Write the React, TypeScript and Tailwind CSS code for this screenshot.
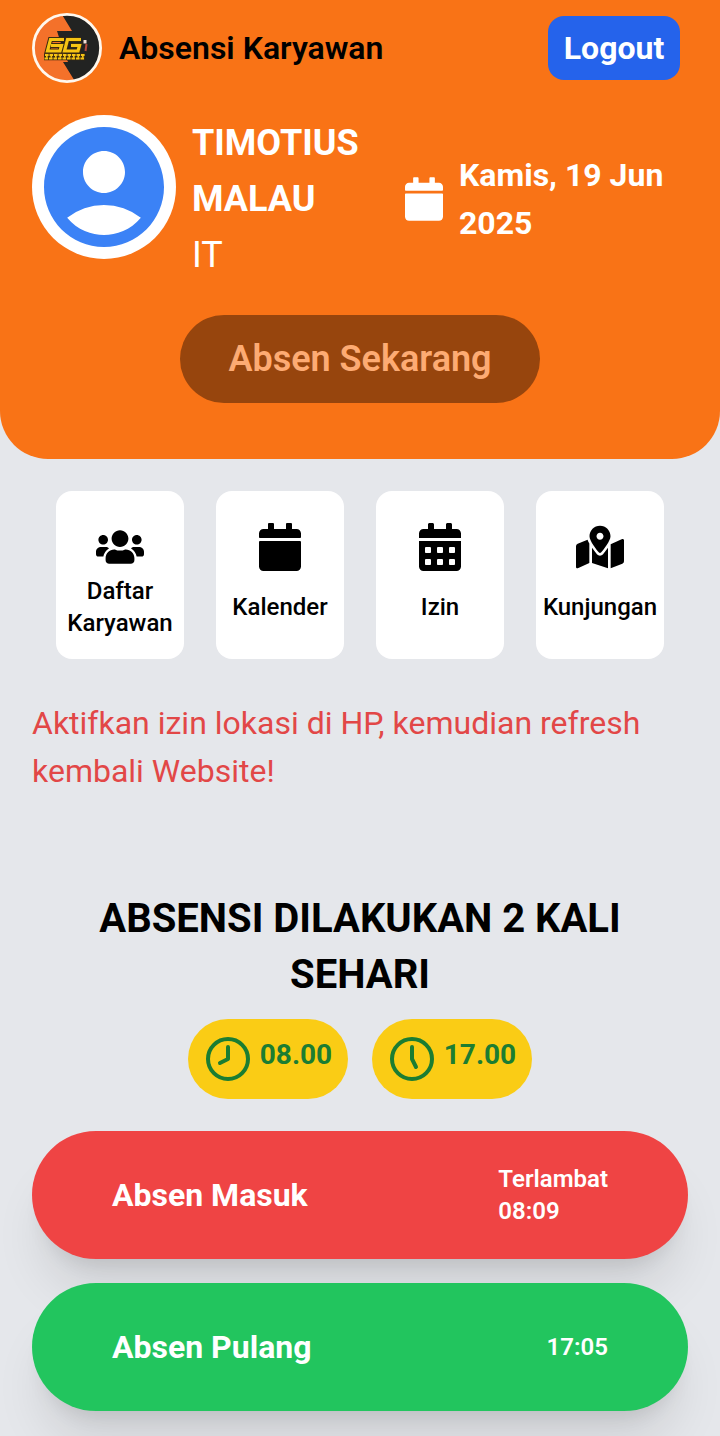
import React from 'react';
import { FaCalendar, FaCalendarAlt, FaMapMarkedAlt, FaUsers } from 'react-icons/fa';
import { MdAccountCircle } from 'react-icons/md';
import { Clock5, Clock8 } from 'lucide-react';

function Logo() {
  return (
    <svg viewBox="0 0 70 70" className="size-[70px]" aria-hidden="true">
      <defs>
        <clipPath id="disc"><circle cx="35" cy="35" r="33.5" /></clipPath>
      </defs>
      <g clipPath="url(#disc)">
        <rect width="70" height="70" fill="#f4712a" />
        <path d="M29 0 L40 18 L25 18 L32 40 L36 49 L31 49 L44 70 H70 V0Z" fill="#222322" />
      </g>
      <circle cx="35" cy="35" r="33.6" fill="none" stroke="#fff8ee" strokeWidth="2.8" />
      <g fill="none" stroke="#3a2a10" strokeWidth="5.2">
        <path d="M32 26.500H18.500L15.500 38H28L29.500 32.500H19" />
        <path d="M49 26.500H35.500L32.500 38H46L47.500 32.500H39" />
      </g>
      <g fill="none" stroke="#f6c414" strokeWidth="3.2">
        <path d="M32 26.500H18.500L15.500 38H28L29.500 32.500H19" />
        <path d="M49 26.500H35.500L32.500 38H46L47.500 32.500H39" />
      </g>
      <path d="M12 43.800H53" stroke="#3a2a10" strokeWidth="7" />
      <path d="M13 42H53M12.500 45.500H52" stroke="#f6c414" strokeWidth="1.8" strokeDasharray="3.600 0.900" />
      <path d="M14 43.700H52" stroke="#f6c414" strokeWidth="2" strokeDasharray="1.600 2.900" />
      <path d="M53 27v3.500" stroke="#f4ded4" strokeWidth="3" />
      <path d="M54.500 31l-1 7" stroke="#b9493c" strokeWidth="2" />
    </svg>
  );
}

function MenuCard({ icon, label }: { icon: React.ReactNode; label: string }) {
  return (
    <button className="flex h-42 w-32 flex-col items-center rounded-2xl bg-white pt-8 text-2xl leading-8 font-medium">
      {icon}
      {label}
    </button>
  );
}

export default function App() {
  return (
    <div className="h-[1436px] overflow-hidden bg-gray-200 font-['Roboto',sans-serif] text-black">
      <header className="h-[459px] rounded-b-[48px] bg-[#f97316] pt-[13px]">
        <div className="flex items-center justify-between pr-10 pl-8">
          <div className="flex items-center gap-[17px]">
            <Logo />
            <h1 className="text-[32px] leading-[48px] font-semibold">Absensi Karyawan</h1>
          </div>
          <button className="h-16 w-33 rounded-2xl bg-[#2563eb] text-[32px] leading-[48px] font-bold text-white">Logout</button>
        </div>
        <div className="mt-8 flex px-8 text-white">
          <div className="size-36 shrink-0 rounded-full bg-white text-[#3b82f6]">
            <MdAccountCircle className="size-36" />
          </div>
          <div className="ml-4 w-[213px] text-4xl leading-[56px]">
            <p className="font-bold">TIMOTIUS MALAU</p>
            <p>IT</p>
          </div>
          <div className="flex h-[168px] items-center">
            <FaCalendar className="h-11 w-[38px] shrink-0" />
            <p className="ml-4 w-[220px] text-[32px] leading-[48px] font-bold">Kamis, 19 Jun 2025</p>
          </div>
        </div>
        <div className="mt-8 flex justify-center">
          <button className="h-22 w-90 rounded-full bg-[#97450d] text-4xl font-semibold text-[#fdab73]">Absen Sekarang</button>
        </div>
      </header>
      <nav className="mt-8 flex justify-center gap-8">
        <MenuCard icon={<FaUsers className="size-12 shrink-0 mb-1" />} label="Daftar Karyawan" />
        <MenuCard icon={<FaCalendar className="mb-5 size-12" />} label="Kalender" />
        <MenuCard icon={<FaCalendarAlt className="mb-5 size-12" />} label="Izin" />
        <MenuCard icon={<FaMapMarkedAlt className="mb-5 size-12" />} label="Kunjungan" />
      </nav>
      <p className="mx-8 mt-10 text-[32px] leading-[48px] text-[#e24747]">Aktifkan izin lokasi di HP, kemudian refresh kembali Website!</p>
      <main className="px-8 pt-24">
        <h2 className="text-center text-[40px] leading-[56px] font-bold">ABSENSI DILAKUKAN 2 KALI SEHARI</h2>
        <div className="mt-4 flex justify-center gap-6 text-[28px] leading-10 font-bold text-[#1b7d32]">
          <div className="flex h-20 w-40 items-center justify-center rounded-full bg-[#facc15]">
            <Clock8 className="size-12" />
            <span className="mb-2 ml-2">08.00</span>
          </div>
          <div className="flex h-20 w-40 items-center justify-center rounded-full bg-[#facc15]">
            <Clock5 className="size-12" />
            <span className="mb-2 ml-2">17.00</span>
          </div>
        </div>
        <div className="mt-8 flex flex-col gap-6 text-white">
          <div className="flex h-32 items-center justify-between rounded-full bg-[#ef4444] px-20 shadow-[0_40px_50px_-10px_rgb(0_0_0/0.1),0_16px_20px_-12px_rgb(0_0_0/0.1)]">
            <p className="text-[32px] leading-[48px] font-bold">Absen Masuk</p>
            <p className="text-2xl leading-8 font-semibold">Terlambat<br />08:09</p>
          </div>
          <div className="flex h-32 items-center justify-between rounded-full bg-[#22c55e] px-20 shadow-[0_40px_50px_-10px_rgb(0_0_0/0.1),0_16px_20px_-12px_rgb(0_0_0/0.1)]">
            <p className="text-[32px] leading-[48px] font-bold">Absen Pulang</p>
            <p className="text-2xl leading-8 font-semibold">17:05</p>
          </div>
        </div>
      </main>
    </div>
  );
}
